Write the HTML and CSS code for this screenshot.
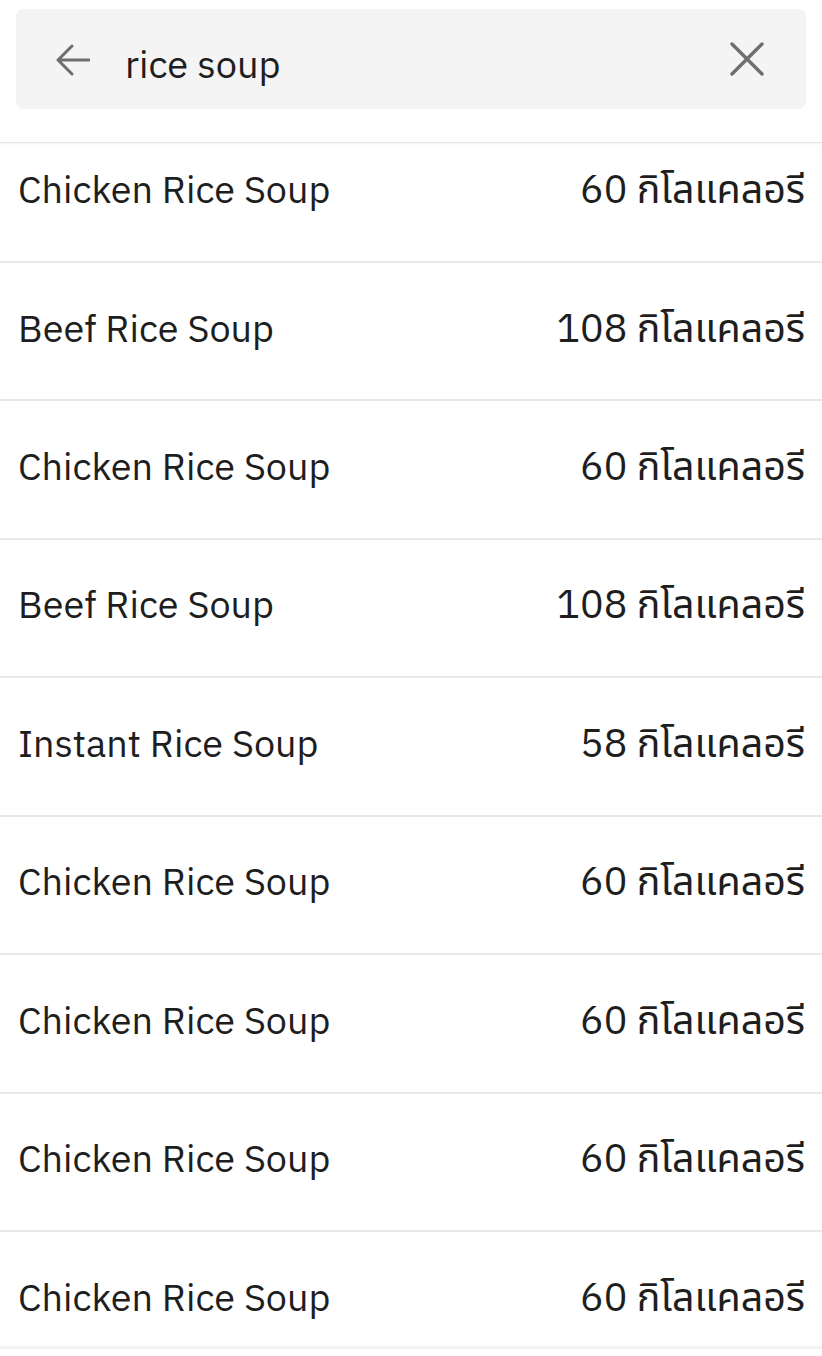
FILE: index.html
```html
<!DOCTYPE html>
<html lang="th">
<head>
<meta charset="utf-8">
<link rel="stylesheet" href="styles.css">
</head>
<body>
<div class="app">
  <header class="header">
    <div class="search">
      <svg class="icon back" viewBox="0 0 34 32" width="34" height="32"><path d="M33 16H3M16 2L2 16l14 14" fill="none" stroke="#6e6e6e" stroke-width="3" stroke-linecap="round" stroke-linejoin="round"/></svg>
      <span class="query">rice soup</span>
      <svg class="icon clear" viewBox="0 0 34 34" width="34" height="34"><path d="M2 2L32 32M32 2L2 32" fill="none" stroke="#6e6e6e" stroke-width="3.4" stroke-linecap="round"/></svg>
    </div>
  </header>
  <main class="list">
    <div class="rows">
      <div class="row"><span class="name">Chicken Rice Soup</span><span class="kcal">60 กิโลแคลอรี</span></div>
      <div class="row"><span class="name">Beef Rice Soup</span><span class="kcal">108 กิโลแคลอรี</span></div>
      <div class="row"><span class="name">Chicken Rice Soup</span><span class="kcal">60 กิโลแคลอรี</span></div>
      <div class="row"><span class="name">Beef Rice Soup</span><span class="kcal">108 กิโลแคลอรี</span></div>
      <div class="row"><span class="name">Instant Rice Soup</span><span class="kcal">58 กิโลแคลอรี</span></div>
      <div class="row"><span class="name">Chicken Rice Soup</span><span class="kcal">60 กิโลแคลอรี</span></div>
      <div class="row"><span class="name">Chicken Rice Soup</span><span class="kcal">60 กิโลแคลอรี</span></div>
      <div class="row"><span class="name">Chicken Rice Soup</span><span class="kcal">60 กิโลแคลอรี</span></div>
      <div class="row"><span class="name">Chicken Rice Soup</span><span class="kcal">60 กิโลแคลอรี</span></div>
    </div>
  </main>
  <footer class="footer"></footer>
</div>
</body>
</html>
```

FILE: styles.css
```css
* { box-sizing: border-box; }
html, body { margin: 0; padding: 0; background: #fff; }
body {
  font-family: "IBM Plex Sans", "Noto Sans", "Noto Sans Thai", "Liberation Sans", sans-serif;
  color: #1e1e1e;
}
.app {
  width: 822px;
  height: 1356px;
  display: flex;
  flex-direction: column;
  overflow: hidden;
}
.header {
  position: relative;
  z-index: 2;
  height: 143px;
  flex: none;
  background: #fff;
  padding: 9px 16px 0;
  border-bottom: 1px solid #e6e6e6;
  box-shadow: 0 1px 2px rgba(0,0,0,0.06);
}
.search {
  height: 100px;
  background: #f4f4f4;
  border-radius: 7px;
  display: flex;
  align-items: center;
  padding: 0 40px 0 40px;
}
.icon { flex: none; display: block; }
.back { margin-top: 1px; }
.query {
  flex: 1;
  margin-left: 35px;
  font-size: 38px;
  color: #1e1e1e;
  line-height: 1;
  padding-top: 9px;
}
.clear { margin-right: 2px; }
.list {
  flex: 1;
  overflow: hidden;
  min-height: 0;
}
.rows { margin-top: -18.4px; }
.row {
  height: 138.43px;
  border-bottom: 2px solid #e8e8e8;
  display: flex;
  align-items: center;
  justify-content: space-between;
  padding: 0 17px 8px 18px;
  line-height: 1.2;
}
.name { font-size: 37.8px; }
.kcal { font-size: 39.4px; white-space: nowrap; }
.footer {
  flex: none;
  height: 10px;
  border-top: 3px solid #f3f3f3;
  background: #fff;
}
```
